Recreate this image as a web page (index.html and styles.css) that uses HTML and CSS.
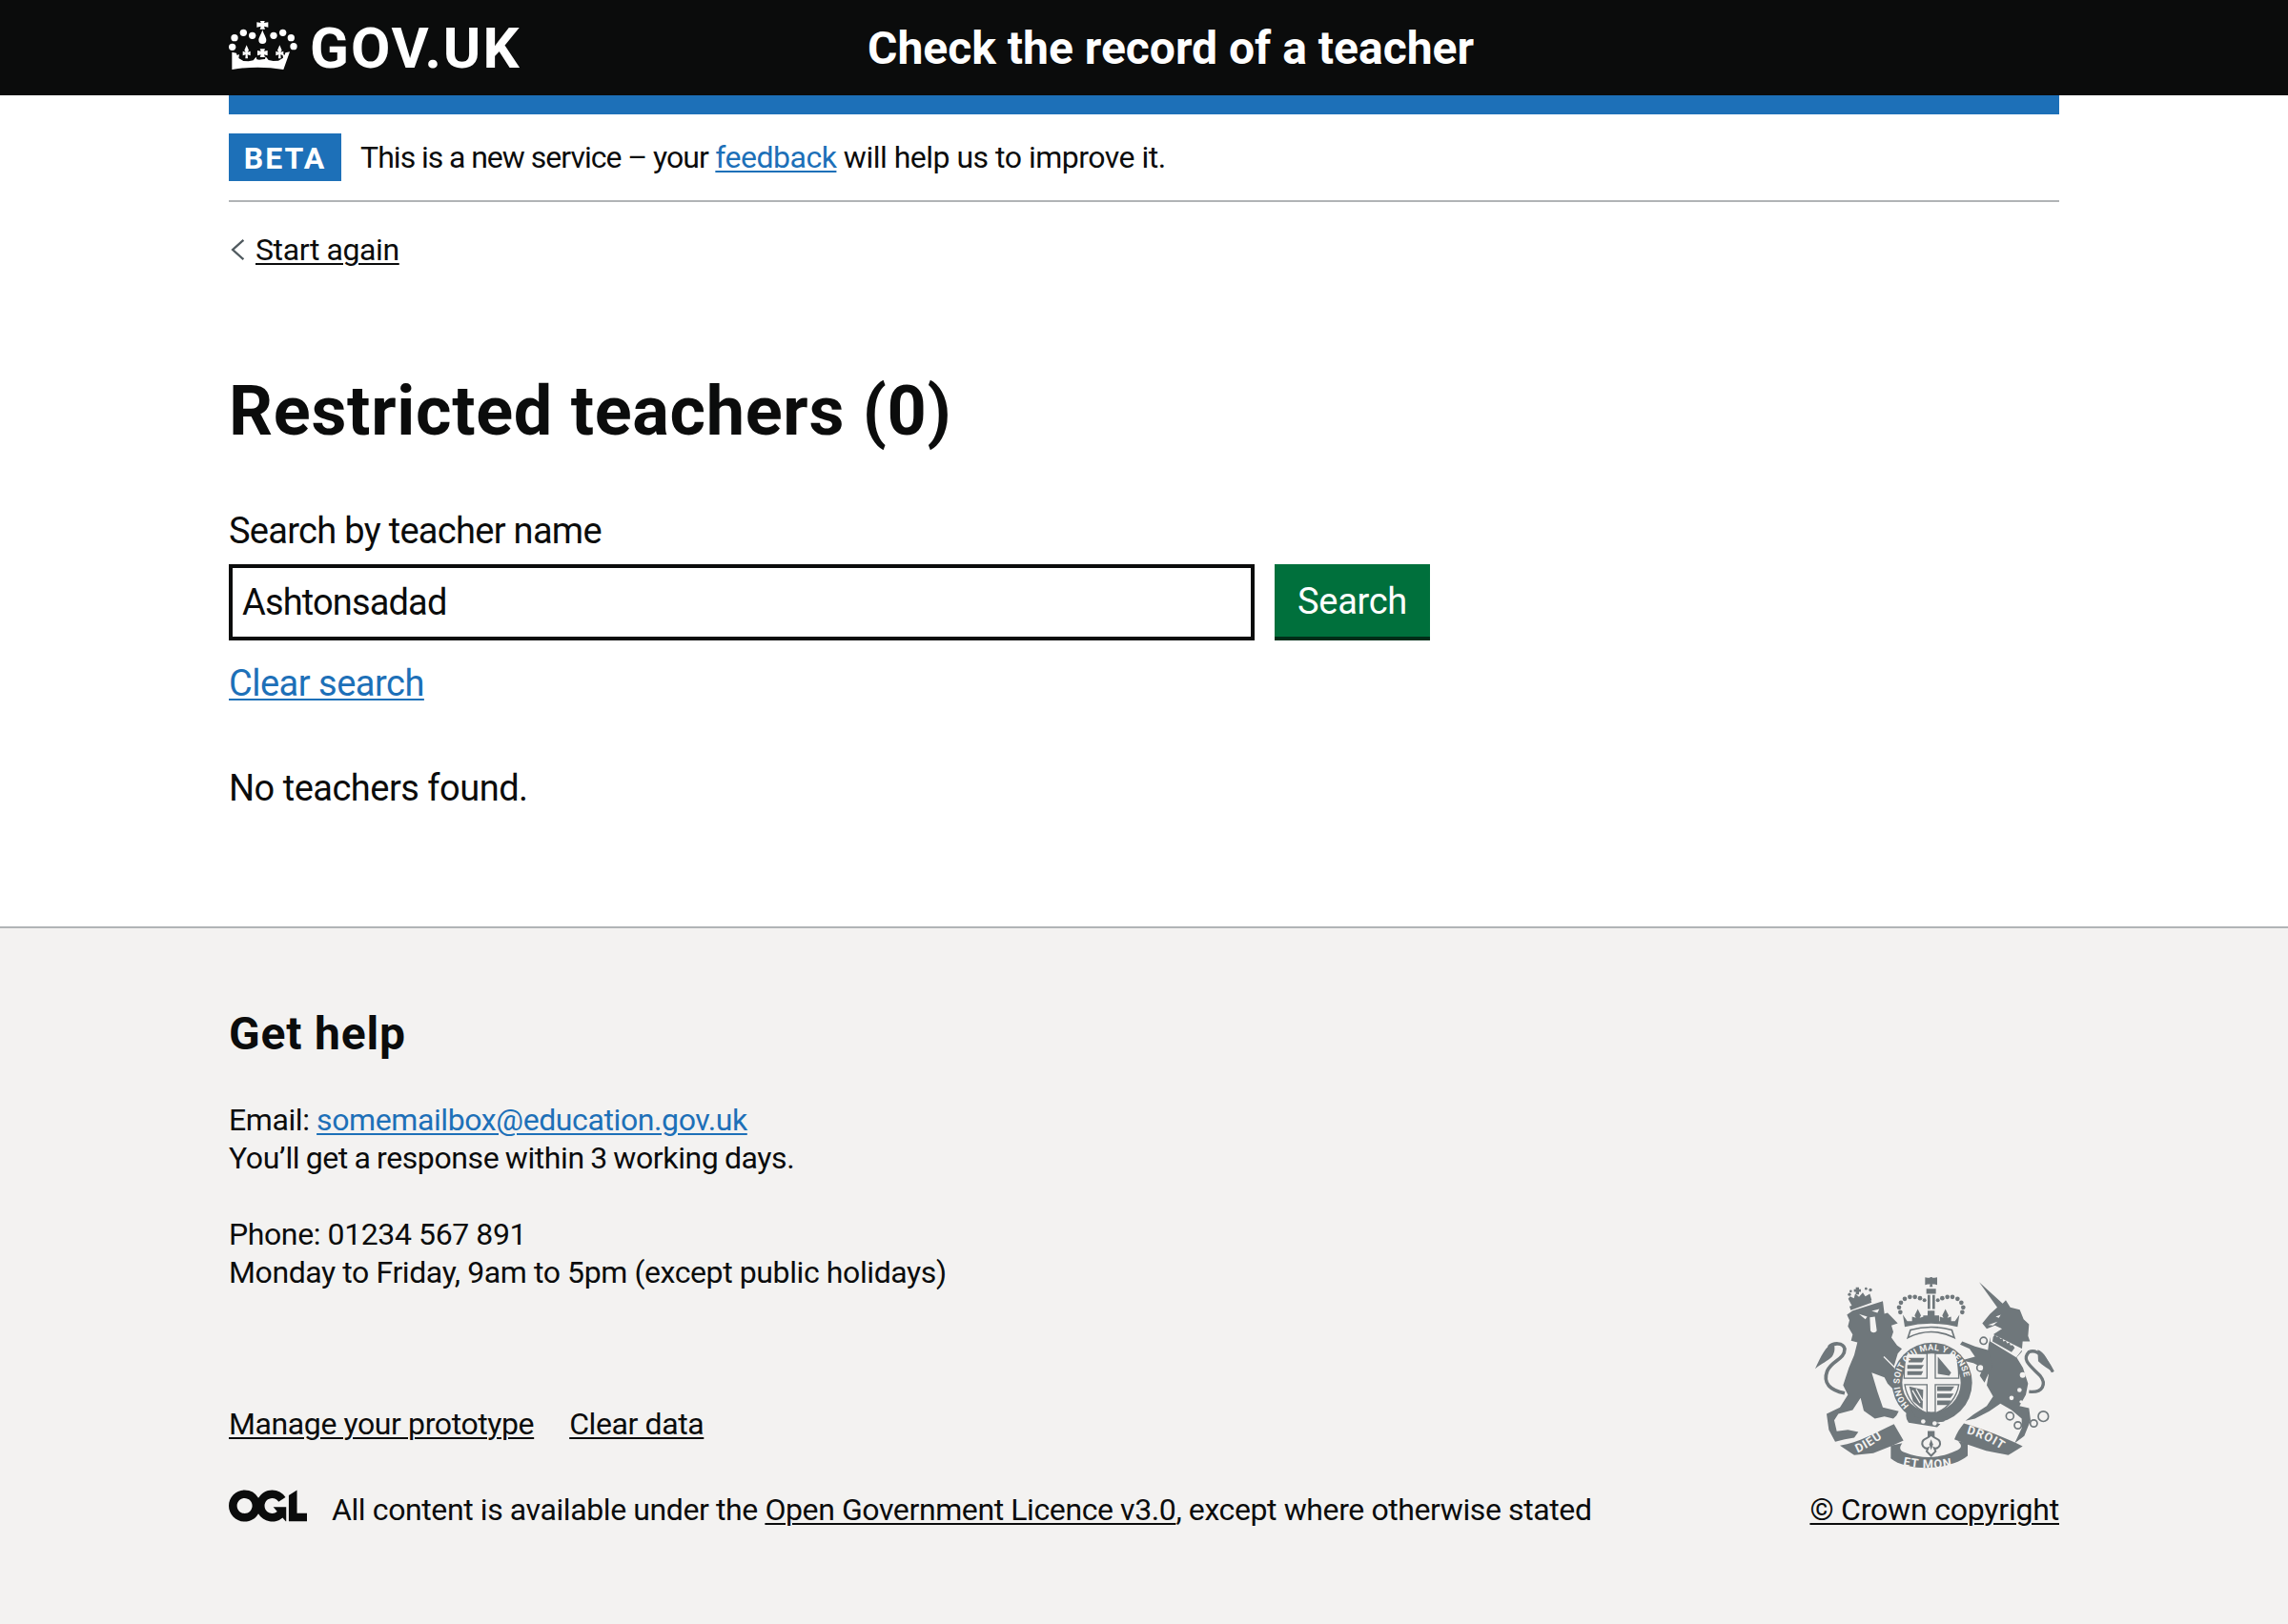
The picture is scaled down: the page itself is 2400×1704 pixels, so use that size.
FILE: index.html
```html
<!DOCTYPE html>
<html lang="en">
<head>
  <meta charset="UTF-8">
  <title>Restricted teachers - Check the record of a teacher</title>
  <link rel="stylesheet" href="styles.css">
</head>
<body>
  <header class="site-header">
    <div class="container header-row">
      <a class="logo" href="#">
        <svg class="crown" viewBox="12 18 216 156" aria-hidden="true">
          <g fill="#fff">
            <path d="M110 16h16l-3 8 13-2v16l-13-3 3 9h-16l3-9-13 3V22l13 2z"/>
            <path d="M118 46c3 12 12 24 12 32a12 12 0 0 1-24 0c0-8 9-20 12-32z"/>
            <circle cx="58" cy="55" r="11"/><circle cx="30" cy="71" r="11"/><circle cx="86" cy="64" r="11"/>
            <circle cx="153" cy="64" r="11"/><circle cx="182" cy="55" r="11"/><circle cx="208" cy="71" r="11"/>
            <circle cx="23" cy="100" r="11"/><circle cx="216" cy="98" r="11"/>
            <path d="M68 94l7 16-4 6 9-3v14l-9-3 1 12h-8l1-12-9 3v-14l9 3-4-6z"/>
            <path d="M172 94l7 16-4 6 9-3v14l-9-3 1 12h-8l1-12-9 3v-14l9 3-4-6z"/>
            <path d="M110 106h16l-3 7 11-2v16l-11-3 3 8h-16l3-8-11 3v-16l11 2z"/>
            <path d="M22 116l14 3 2 7 7-3-2 12 15 9 16 1 15-3 9-11 2 8 8 1 10-1 8-1 2-8 9 11 15 3 16-1 15-9-2-12 7 3 2-7 14-3-20 56q-81-14-162 0z"/>
          </g>
        </svg>
        <span class="logo-text">GOV.UK</span>
      </a>
      <a class="service-name" href="#">Check the record of a teacher</a>
    </div>
  </header>

  <div class="container">
    <div class="blue-bar"></div>
    <div class="phase-banner">
      <strong class="tag">BETA</strong>
      <span><span class="phase-lead">This is a new service – your</span> <a class="link" href="#">feedback</a> will help us to improve it.</span>
    </div>
    <div class="back">
      <svg class="chevron" viewBox="0 0 14 22" aria-hidden="true"><path d="M12.5 1.5 2 11l10.500 9.500" fill="none" stroke="#505a5f" stroke-width="2.200"/></svg>
      <a class="dark-link" href="#">Start again</a>
    </div>

    <main class="main">
      <h1>Restricted teachers (0)</h1>
      <form class="search">
        <label for="search-name">Search by teacher name</label>
        <div class="search-row">
          <input id="search-name" type="text" value="Ashtonsadad">
          <button type="button">Search</button>
        </div>
      </form>
      <p class="clear"><a class="link" href="#">Clear search</a></p>
      <p class="none">No teachers found.</p>
    </main>
  </div>

  <footer class="site-footer">
    <div class="container footer-row">
      <div class="footer-left">
        <h2>Get help</h2>
        <p>Email: <a class="link" href="#">somemailbox@education.gov.uk</a><br><span class="response">You’ll get a response within 3 working days.</span></p>
        <p>Phone: 01234 567 891<br>Monday to Friday, 9am to 5pm (except public holidays)</p>
        <ul class="footer-links">
          <li><a class="dark-link" href="#">Manage your prototype</a></li>
          <li><a class="dark-link" href="#">Clear data</a></li>
        </ul>
        <div class="licence">
          <svg class="ogl" viewBox="0 0 483.2 195.7" aria-hidden="true"><path fill="#0b0c0c" d="M421.5 142.8V.1l-50.7 32.3v161.1h112.4v-50.7zm-122.3-9.6A47.12 47.12 0 0 1 221 97.8c0-26 21.1-47.1 47.1-47.1 16.7 0 31.4 8.7 39.7 21.8l42.7-27.2A97.63 97.63 0 0 0 268.1 0c-36.5 0-68.3 20.1-85.1 49.7A98 98 0 0 0 97.8 0C43.9 0 0 43.9 0 97.8s43.9 97.8 97.8 97.8c36.5 0 68.3-20.1 85.1-49.7a97.76 97.76 0 0 0 149.6 25.4l19.4 22.2h3v-87.8h-80l24.3 27.5zM97.8 145c-26 0-47.1-21.1-47.1-47.1s21.1-47.1 47.1-47.1 47.2 21 47.2 47S123.8 145 97.8 145"/></svg>
          <span>All content is available under the <a class="dark-link" href="#">Open Government Licence v3.0</a>, except where otherwise stated</span>
        </div>
      </div>
      <div class="footer-right">
        <svg class="arms" viewBox="60 60 780 620" aria-hidden="true">
          <g fill="#6f777b">
            <!-- lion -->
            <path d="M172 178L190 165 285 135 290 175 300 172 332 205 312 212 318 232 312 250 330 275 345 285 332 300 320 340 330 385 346 402 325 420 300 395 290 375 250 360 268 420 285 470 335 482 328 495 318 505 290 498 260 505 225 480 215 440 190 478 145 490 132 510 140 545 175 540 208 547 195 565 165 570 135 578 115 540 108 490 150 470 175 430 160 400 178 345 195 305 205 265 185 260 190 240 175 215 180 195Z"/>
            <path d="M165 425c-45-10-70-30-55-70 15-35 55-35 55-70-5-20-35-20-50-5" fill="none" stroke="#6f777b" stroke-width="11"/>
            <path d="M130 268c-25 7-40 42-58 80 23-18 38-23 53-38 10-15 10-30 5-42z"/>
            <path d="M210 176l26 8-6 8zM250 166l24-6-6 12zM244 186l16-2 6 44a11 11 0 0 1-20 0z" fill="#f3f2f1"/>
            <path d="M288 310l46 46" stroke="#f3f2f1" stroke-width="4"/>
            <!-- lion crown -->
            <path d="M176 128l6-8 12 6 4-14 12 10 12-14 8 12 14-8 6 20-60 22z"/>
            <path d="M180 152l66-22 4 10-66 24z"/>
            <path d="M200 92h10v6h6v8h-6v8h-10v-8h-6v-8h6z"/>
            <circle cx="180" cy="114" r="5"/><circle cx="246" cy="100" r="5"/><circle cx="232" cy="96" r="4"/><circle cx="184" cy="104" r="4"/>
            <!-- centre crown -->
            <path d="M426 62h8l-2-6h10l-2 6h8l8-2v24l-8-2h-8l2 8h-10l2-8h-8l-8 2V60z"/>
            <path d="M422 96h30v16h-30zM426 116h8v44h-8zM441 116h8v44h-8z"/>
            <circle cx="340" cy="170" r="7"/><circle cx="336" cy="155" r="7"/><circle cx="342" cy="140" r="7"/><circle cx="354" cy="128" r="7"/><circle cx="370" cy="122" r="7"/><circle cx="386" cy="122" r="7"/><circle cx="402" cy="126" r="7"/><circle cx="416" cy="132" r="6"/>
            <circle cx="535" cy="170" r="7"/><circle cx="538" cy="155" r="7"/><circle cx="532" cy="140" r="7"/><circle cx="520" cy="128" r="7"/><circle cx="504" cy="122" r="7"/><circle cx="488" cy="122" r="7"/><circle cx="472" cy="126" r="7"/><circle cx="458" cy="132" r="6"/>
            <path d="M395 160l10 20-4 8 12-4v20h-36v-20l12 4-4-8zM482 160l10 20-4 8 12-4v20h-36v-20l12 4-4-8zM426 165h22v15h14v22h-50v-22h14z"/>
            <path d="M348 178l14 20h150l14-20-6 38q-83-20-166 0z"/>
            <path d="M364 250q73-36 146 0l-8-24q-65-18-130 0z" fill="#f3f2f1" stroke="#6f777b" stroke-width="5"/>
            <!-- garter -->
            <circle cx="440" cy="392" r="126"/>
            <circle cx="438" cy="392" r="92" fill="#f3f2f1"/>
            <path d="M360 300h64v78h-72c0-30 2-60 8-78zM450 300h64c6 18 10 48 10 78h-74zM354 398h70v90c-40-15-64-50-70-90zM450 398h74c-6 40-34 75-74 90z" fill="#f3f2f1" stroke="#6f777b" stroke-width="4"/>
            <path d="M366 314h50l-8 14h-42zM362 336h52l-8 12h-44zM362 356h50l-6 12h-44zM458 310l42 50-6 10-36-6zM456 404h54l-10 14h-44zM456 426h52l-10 14h-42zM456 448h44l-10 14h-34zM368 404l44 10-2 60-30-24z"/>
            <path d="M378 416l24 40M390 412l20 36" stroke="#f3f2f1" stroke-width="4" fill="none"/>
            <path d="M358 484q60 40 120 30l6-16-20 4-60 10q-20-2-34-38z"/>
            <path d="M362 478q-10 20 4 40l90 14 10-10-80-24-14-30z"/>
            <circle cx="412" cy="514" r="7" fill="#f3f2f1"/><circle cx="448" cy="520" r="7" fill="#f3f2f1"/>
            <!-- unicorn -->
            <path d="M588 75L662 143 672 132 686 155 716 162 728 192 745 208 742 245 748 262 725 262 722 295 706 312 726 345 742 395 735 430 715 465 745 472 750 510 730 560 700 582 722 535 722 505 690 478 655 458 620 482 575 505 545 512 570 492 612 465 632 435 612 400 618 365 612 320 618 270 625 245 660 222 638 212 612 222 598 205 622 176 645 155Z"/>
            <path d="M618 290L575 278 535 262 528 272 558 285 575 310 545 318 535 322 570 330 600 345 590 370 605 392 612 375 630 340Z"/>
            <path d="M640 184l16-6-6 10zM616 210l30-10-14 12z" fill="#f3f2f1"/>
            <path d="M625 236l100 50-20 26-82-50z" fill="#f3f2f1"/>
            <path d="M632 248l6-8 6 8 8-2 2 8 8 0 2 8 8-2 4 8 8-2 2 8 8 0 6 8-10 14-60-34z"/>
            <path d="M745 420c45 5 55-25 35-50-30-30-60-50-35-75 25-10 50 15 75 63" fill="none" stroke="#6f777b" stroke-width="10"/>
            <path d="M772 288c20 5 35 35 50 72-15-12-35-22-48-36z"/>
            <!-- scrolls -->
            <path d="M150 590c60-10 110-40 170-68l30 52-40 18-55 22-60 6z"/>
            <path d="M310 590l36-8c-10 14-8 22 4 28 60 24 110 22 170-6 14-8 14-16 2-28l30 6 0 40c-30 26-90 38-130 38s-90-10-112-30z"/>
            <path d="M510 570c8-20 18-36 30-50 60 18 130 44 185 72l-45 28-70-14-60-20z"/>
            <path d="M426 544h22v22h-22z"/>
            <path d="M437 556c10 14 30 10 28 30-2 12-14 14-18 12l4 10-14 14-14-14 4-10c-4 2-16 0-18-12-2-20 18-16 28-30z" fill="#f3f2f1" stroke="#6f777b" stroke-width="6"/>
            <path d="M437 570l6 16-6 18-6-18z"/>
          </g>
          <g fill="#f3f2f1">
            <circle cx="725" cy="368" r="9"/>
            <circle cx="715" cy="415" r="7"/><circle cx="690" cy="440" r="7"/><circle cx="720" cy="452" r="5"/>
          </g>
          <g fill="#f3f2f1" stroke="#6f777b" stroke-width="5">
            <circle cx="602" cy="260" r="11"/><circle cx="592" cy="345" r="11"/>
            <circle cx="685" cy="497" r="12"/><circle cx="710" cy="526" r="11"/><circle cx="760" cy="520" r="11"/><circle cx="790" cy="498" r="16"/>
          </g>
          <defs>
            <path id="garter-top" d="M368 464A102 102 0 1 1 512 464"/>
            <path id="scroll-left" d="M205 612C240 600 280 565 320 545"/>
            <path id="scroll-mid" d="M348 652Q437 672 528 650"/>
            <path id="scroll-right" d="M548 552C590 562 635 585 672 612"/>
          </defs>
          <g class="arms-text" fill="#f3f2f1">
            <text class="motto" font-size="27"><textPath href="#garter-top">HONI SOIT QUI MAL Y PENSE</textPath></text>
            <text class="scroll" font-size="38"><textPath href="#scroll-left">DIEU</textPath></text>
            <text class="scroll" font-size="38"><textPath href="#scroll-mid">ET MON</textPath></text>
            <text class="scroll" font-size="38"><textPath href="#scroll-right">DROIT</textPath></text>
          </g>
        </svg>
        <a class="dark-link copyright" href="#">© Crown copyright</a>
      </div>
    </div>
  </footer>
</body>
</html>
```

FILE: styles.css
```css
body {
  margin: 0;
  font-family: Roboto, sans-serif;
  color: #0b0c0c;
  background: #fff;
}
a {
  text-underline-offset: 3px;
  text-decoration-thickness: 2px;
}
.container {
  width: 1920px;
  margin: 0 240px;
}

/* header */
.site-header {
  background: #0b0c0c;
  height: 100px;
}
.header-row {
  display: flex;
  align-items: center;
  height: 100px;
}
.logo {
  width: 640px;
  display: flex;
  align-items: center;
  color: #fff;
  text-decoration: none;
}
.crown {
  width: 72px;
  height: 52px;
  margin-right: 13px;
  margin-top: -4px;
}
.logo-text {
  font-size: 60px;
  font-weight: 700;
  letter-spacing: 2px;
}
.service-name {
  margin-left: 30px;
  color: #fff;
  font-size: 48px;
  font-weight: 700;
  text-decoration: none;
}
.blue-bar {
  height: 20px;
  background: #1d70b8;
}

/* phase banner */
.phase-banner {
  display: flex;
  align-items: center;
  gap: 20px;
  padding: 20px 0;
  border-bottom: 2px solid #b1b4b6;
  font-size: 32px;
  letter-spacing: -0.5px;
}
.phase-lead {
  letter-spacing: -0.95px;
  word-spacing: -0.3px;
}
.tag {
  width: 118px;
  height: 50px;
  line-height: 52px;
  text-align: center;
  background: #1d70b8;
  color: #fff;
  font-size: 32px;
  letter-spacing: 2px;
}
.link {
  color: #1d70b8;
}
.dark-link {
  color: #0b0c0c;
}
.back {
  display: flex;
  align-items: center;
  gap: 11px;
  margin-top: 30px;
  height: 40px;
  font-size: 32px;
  letter-spacing: -0.4px;
}
.chevron {
  width: 15px;
  height: 24px;
  margin-left: 2px;
}

/* main */
h1 {
  margin: 0;
  padding-top: 110px;
  font-size: 72px;
  line-height: 80px;
  font-weight: 700;
  letter-spacing: 0.7px;
}
.search {
  margin-top: 60px;
}
label {
  display: block;
  font-size: 38px;
  line-height: 50px;
  letter-spacing: -0.7px;
  margin-bottom: 10px;
}
.search-row {
  display: flex;
  gap: 21px;
}
input {
  width: 1076px;
  height: 80px;
  box-sizing: border-box;
  border: 4px solid #0b0c0c;
  padding: 0 10px;
  font: 38px Roboto, sans-serif;
  letter-spacing: -0.85px;
  color: #0b0c0c;
}
button {
  width: 163px;
  height: 76px;
  border: 0;
  padding: 2px 0 0;
  background: #00703c;
  box-shadow: 0 4px 0 #002d18;
  color: #fff;
  font: 38px Roboto, sans-serif;
  letter-spacing: -0.3px;
}
.clear, .none {
  font-size: 38px;
  line-height: 50px;
  letter-spacing: -0.5px;
  margin: 0;
}
.clear {
  margin-top: 20px;
}
.none {
  margin-top: 60px;
}
.main {
  padding-bottom: 120px;
}

/* footer */
.site-footer {
  background: #f3f2f1;
  border-top: 2px solid #b1b4b6;
  height: 733px;
  box-sizing: border-box;
  font-size: 32px;
  line-height: 40px;
  letter-spacing: -0.4px;
}
.footer-row {
  display: flex;
  justify-content: space-between;
  align-items: flex-end;
  padding-top: 81px;
}
h2 {
  margin: 0 0 40px;
  font-size: 48px;
  line-height: 60px;
  font-weight: 700;
  letter-spacing: 0.8px;
}
.footer-left p {
  margin: 0 0 40px;
}
.response {
  word-spacing: -1px;
}
.footer-links {
  display: flex;
  gap: 37px;
  list-style: none;
  margin: 119px 0 50px;
  padding: 0;
}
.licence {
  display: flex;
  align-items: center;
  gap: 26px;
}
.ogl {
  width: 82px;
  height: 34px;
  margin-top: -8px;
}
.footer-right {
  display: flex;
  flex-direction: column;
  align-items: flex-end;
}
.arms {
  width: 260px;
  height: 207px;
  margin-bottom: 17px;
}
.copyright {
  letter-spacing: -0.2px;
}
.arms-text {
  font-family: Roboto, sans-serif;
  font-weight: 700;
}
.motto {
  letter-spacing: 1px;
}
.scroll {
  letter-spacing: 3px;
}
```
